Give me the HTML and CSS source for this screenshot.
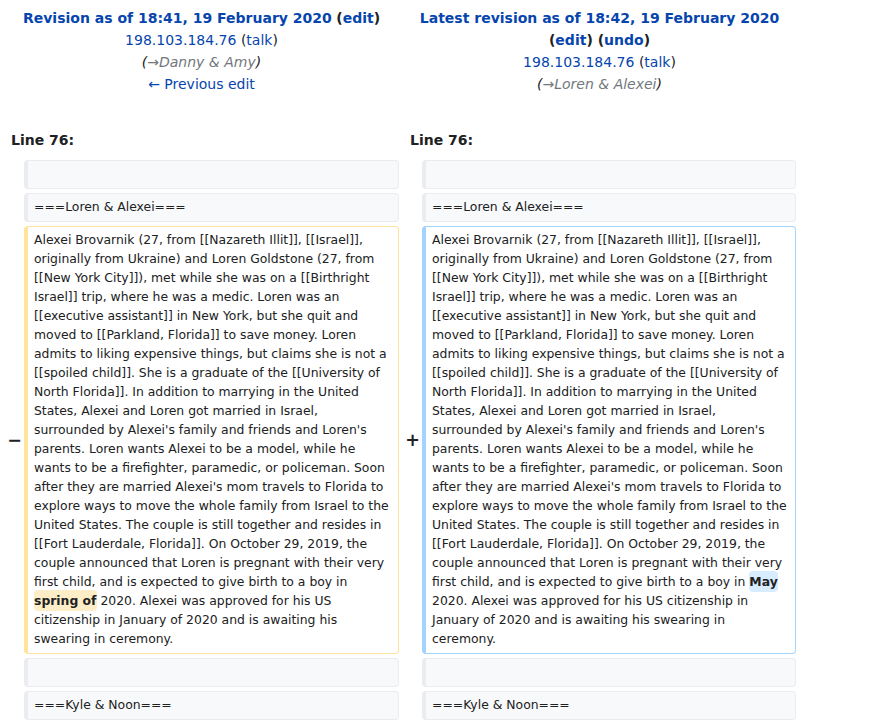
FILE: index.html
```html
<!DOCTYPE html>
<html lang="en">
<head>
<meta charset="utf-8">
<title>Difference between revisions</title>
<link rel="stylesheet" href="styles.css">
</head>
<body>
<div class="diff">
  <div class="title">
    <div><a href="#" class="strong">Revision as of 18:41, 19 February 2020</a> <strong>(<a href="#">edit</a>)</strong></div>
    <div><a href="#">198.103.184.76</a> (<a href="#">talk</a>)</div>
    <div class="comment">(<span class="auto"><a href="#" class="auto">→</a>Danny &amp; Amy</span>)</div>
    <div><a href="#">← Previous edit</a></div>
  </div>
  <div class="title">
    <div><a href="#" class="strong">Latest revision as of 18:42, 19 February 2020</a> <strong>(<a href="#">edit</a>) (<a href="#">undo</a>)</strong></div>
    <div><a href="#">198.103.184.76</a> (<a href="#">talk</a>)</div>
    <div class="comment">(<span class="auto"><a href="#" class="auto">→</a>Loren &amp; Alexei</span>)</div>
  </div>

  <div class="lineno">Line 76:</div>
  <div class="lineno">Line 76:</div>

  <div class="marker"></div>
  <div class="line context"><br></div>
  <div class="marker"></div>
  <div class="line context"><br></div>

  <div class="marker"></div>
  <div class="line context">===Loren &amp; Alexei===</div>
  <div class="marker"></div>
  <div class="line context">===Loren &amp; Alexei===</div>

  <div class="marker">−</div>
  <div class="line deleted">Alexei Brovarnik (27, from [[Nazareth Illit]], [[Israel]], originally from Ukraine) and Loren Goldstone (27, from [[New York City]]), met while she was on a [[Birthright Israel]] trip, where he was a medic. Loren was an [[executive assistant]] in New York, but she quit and moved to [[Parkland, Florida]] to save money. Loren admits to liking expensive things, but claims she is not a [[spoiled child]]. She is a graduate of the [[University of North Florida]]. In addition to marrying in the United States, Alexei and Loren got married in Israel, surrounded by Alexei's family and friends and Loren's parents. Loren wants Alexei to be a model, while he wants to be a firefighter, paramedic, or policeman. Soon after they are married Alexei's mom travels to Florida to explore ways to move the whole family from Israel to the United States. The couple is still together and resides in [[Fort Lauderdale, Florida]]. On October 29, 2019, the couple announced that Loren is pregnant with their very first child, and is expected to give birth to a boy in <del class="change">spring of</del> 2020. Alexei was approved for his US citizenship in January of 2020 and is awaiting his swearing in ceremony.</div>
  <div class="marker">+</div>
  <div class="line added">Alexei Brovarnik (27, from [[Nazareth Illit]], [[Israel]], originally from Ukraine) and Loren Goldstone (27, from [[New York City]]), met while she was on a [[Birthright Israel]] trip, where he was a medic. Loren was an [[executive assistant]] in New York, but she quit and moved to [[Parkland, Florida]] to save money. Loren admits to liking expensive things, but claims she is not a [[spoiled child]]. She is a graduate of the [[University of North Florida]]. In addition to marrying in the United States, Alexei and Loren got married in Israel, surrounded by Alexei's family and friends and Loren's parents. Loren wants Alexei to be a model, while he wants to be a firefighter, paramedic, or policeman. Soon after they are married Alexei's mom travels to Florida to explore ways to move the whole family from Israel to the United States. The couple is still together and resides in [[Fort Lauderdale, Florida]]. On October 29, 2019, the couple announced that Loren is pregnant with their very first child, and is expected to give birth to a boy in <ins class="change">May</ins> 2020. Alexei was approved for his US citizenship in January of 2020 and is awaiting his swearing in ceremony.</div>

  <div class="marker"></div>
  <div class="line context"><br></div>
  <div class="marker"></div>
  <div class="line context"><br></div>

  <div class="marker"></div>
  <div class="line context">===Kyle &amp; Noon===</div>
  <div class="marker"></div>
  <div class="line context">===Kyle &amp; Noon===</div>
</div>
</body>
</html>
```

FILE: styles.css
```css
html, body {
  margin: 0;
  background: #ffffff;
}

body {
  color: #202122;
  font-family: "DejaVu Sans", sans-serif;
}

a {
  color: #0645ad;
  text-decoration: none;
}

.diff {
  display: grid;
  grid-template-columns: 16px 375px 15px 374px;
  gap: 4px;
  padding: 4px;
  width: 800px;
  box-sizing: border-box;
}

.title {
  grid-column: span 2;
  text-align: center;
  font-size: 14px;
  line-height: 22px;
  padding: 3px 0;
}

.title .strong,
.title strong {
  font-weight: bold;
}

.comment {
  font-style: italic;
}

.comment .auto {
  color: #72777d;
}

.lineno {
  grid-column: span 2;
  font-size: 14px;
  font-weight: bold;
  line-height: 22px;
  padding: 27px 0 5px 7px;
}

.marker {
  display: flex;
  align-items: center;
  justify-content: flex-end;
  font-weight: bold;
  font-size: 17.5px;
  line-height: 1.2;
  margin-right: -2px;
}

.line {
  font-size: 12.4px;
  line-height: 19px;
  padding: 3px 6px 5px;
  border: 1px solid;
  border-left-width: 4px;
  border-radius: 4px;
  white-space: pre-wrap;
  overflow-wrap: break-word;
}

.context {
  background: #f8f9fa;
  border-color: #eaecf0;
}

.deleted {
  background: #ffffff;
  border-color: #ffe49c;
}

.added {
  background: #ffffff;
  border-color: #a3d3ff;
}

.change {
  text-decoration: none;
  font-weight: bold;
  border-radius: 0.33em;
  padding: 0.25em 0;
}

.deleted .change {
  background: #feeec8;
}

.added .change {
  background: #d8ecff;
}
```
